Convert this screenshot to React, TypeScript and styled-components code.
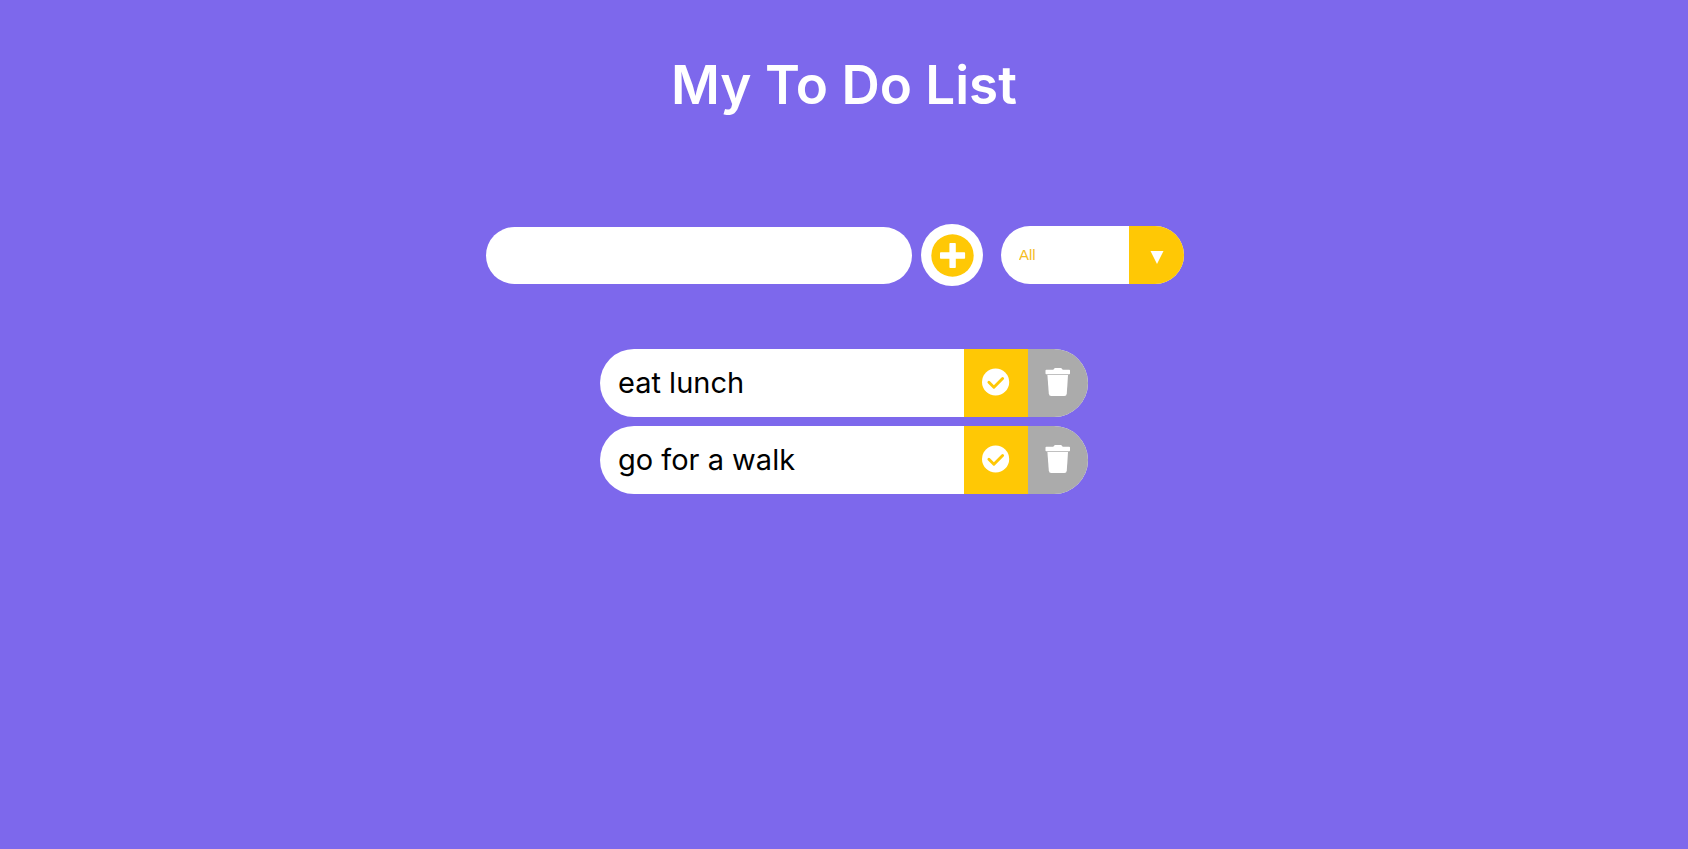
import React, { useState } from "react";
import styled, { createGlobalStyle } from "styled-components";

const GlobalStyle = createGlobalStyle`
  * {
    box-sizing: border-box;
  }

  body {
    margin: 0;
    min-height: 100vh;
    background: #7d68ec;
    font-family: Inter, "Open Sans", sans-serif;
  }
`;

const Header = styled.header`
  display: flex;
  justify-content: center;
  padding: 48px 16px 0;
`;

const Title = styled.h1`
  margin: 0;
  color: #fff;
  font-size: 53px;
  font-weight: 600;
  line-height: 74px;
`;

const Form = styled.form`
  display: flex;
  flex-wrap: wrap;
  align-items: center;
  justify-content: center;
  margin-top: 102px;
`;

const TaskInput = styled.input`
  width: 426px;
  max-width: 100%;
  height: 57px;
  padding: 0 24px;
  border: 0;
  border-radius: 29px;
  outline: 0;
  background: #fff;
  color: #000;
  font: inherit;
  font-size: 24px;
`;

const AddButton = styled.button`
  display: flex;
  align-items: center;
  justify-content: center;
  width: 62px;
  height: 62px;
  margin-left: 9px;
  padding: 0;
  border: 0;
  border-radius: 50%;
  background: #fff;
  cursor: pointer;
`;

const Filter = styled.div`
  display: grid;
  grid-template-columns: 128px 55px;
  height: 58px;
  margin: 0 18px;
  overflow: hidden;
  border-radius: 29px;
  background: #fff;
`;

const FilterSelect = styled.select`
  grid-area: 1 / 1 / 2 / 3;
  padding: 0 18px 2px;
  border: 0;
  outline: 0;
  appearance: none;
  background: transparent;
  color: #f5bd1f;
  font-family: "Liberation Sans", Arial, sans-serif;
  font-size: 15px;
  cursor: pointer;
`;

const FilterArrow = styled.span`
  display: flex;
  grid-area: 1 / 2 / 2 / 3;
  align-items: center;
  justify-content: center;
  padding-top: 5px;
  background: #ffc805;
  pointer-events: none;
`;

const List = styled.ul`
  display: grid;
  gap: 9px;
  width: 488px;
  max-width: 100%;
  margin: 63px auto 0;
  padding: 0;
  list-style: none;
`;

const Item = styled.li`
  display: flex;
  height: 68px;
  overflow: hidden;
  border-radius: 34px;
  background: #fff;
`;

const ItemText = styled.span<{ $done: boolean }>`
  flex: 1;
  padding-left: 18px;
  color: #000;
  font-size: 29px;
  line-height: 68px;
  opacity: ${(p) => (p.$done ? 0.5 : 1)};
  text-decoration: ${(p) => (p.$done ? "line-through" : "none")};
`;

const ItemButton = styled.button<{ $kind: "check" | "trash" }>`
  display: flex;
  align-items: center;
  justify-content: center;
  width: ${(p) => (p.$kind === "check" ? 64 : 60)}px;
  padding: 0 0 2px;
  border: 0;
  background: ${(p) => (p.$kind === "check" ? "#ffc805" : "#ababab")};
  cursor: pointer;
`;

const PlusIcon = () => (
  <svg width="43" height="43" viewBox="0 0 43 43" aria-hidden="true">
    <circle cx="21.5" cy="21.5" r="21.2" fill="#ffc805" />
    <path
      d="M19.2 9h4.8q.8 0 .8.8v8.4h8.5q.8 0 .8.8v5q0 .8-.8.8h-8.5v8.5q0 .8-.8.8h-4.8q-.8 0-.8-.8v-8.5H9.8q-.8 0-.8-.8v-5q0-.8.8-.8h8.6V9.800q0-.8.8-.8z"
      fill="#fff"
    />
  </svg>
);

const CheckIcon = () => (
  <svg width="28" height="28" viewBox="0 0 28 28" aria-hidden="true">
    <circle cx="13.600" cy="14" r="13.6" fill="#fff" />
    <path
      d="M6.900 14.200l5 5L20.600 10.500"
      fill="none"
      stroke="#ffc805"
      strokeWidth="2.9"
      strokeLinecap="round"
      strokeLinejoin="round"
    />
  </svg>
);

const TrashIcon = () => (
  <svg width="26" height="28" viewBox="0 0 26 28" fill="#fff" aria-hidden="true">
    <path d="M1.300 1.800h7L9.200.5Q9.600 0 10.300 0h5.400q.7 0 1.100.5l.9 1.300h6.500q.8 0 .8.8v2.800q0 .8-.8.8H1.300q-.8 0-.8-.8V2.600q0-.8.8-.8z" />
    <path d="M2.400 6.900h20.600l-1.200 18.600q-.2 2.500-2.400 2.500H6.200q-2.200 0-2.400-2.500z" />
  </svg>
);

type Todo = { id: number; text: string; done: boolean };

export default function App() {
  const [text, setText] = useState("");
  const [filter, setFilter] = useState("all");
  const [todos, setTodos] = useState<Todo[]>([
    { id: 1, text: "eat lunch", done: false },
    { id: 2, text: "go for a walk", done: false },
  ]);

  const addTodo = (event: React.FormEvent) => {
    event.preventDefault();
    if (!text.trim()) return;
    setTodos([...todos, { id: Date.now(), text, done: false }]);
    setText("");
  };

  const toggle = (id: number) =>
    setTodos(todos.map((t) => (t.id === id ? { ...t, done: !t.done } : t)));

  const remove = (id: number) => setTodos(todos.filter((t) => t.id !== id));

  const visible = todos.filter(
    (t) => filter === "all" || t.done === (filter === "completed")
  );

  return (
    <>
      <GlobalStyle />
      <Header>
        <Title>My To Do List</Title>
      </Header>
      <main>
        <Form onSubmit={addTodo}>
          <TaskInput
            type="text"
            aria-label="New task"
            value={text}
            onChange={(e) => setText(e.target.value)}
          />
          <AddButton type="submit" aria-label="Add task">
            <PlusIcon />
          </AddButton>
          <Filter>
            <FilterSelect
              aria-label="Filter tasks"
              value={filter}
              onChange={(e) => setFilter(e.target.value)}
            >
              <option value="all">All</option>
              <option value="completed">Completed</option>
              <option value="uncompleted">Uncompleted</option>
            </FilterSelect>
            <FilterArrow>
              <svg width="14" height="13" viewBox="0 0 14 13" aria-hidden="true">
                <path d="M.5 0h13L7 13z" fill="#fff" />
              </svg>
            </FilterArrow>
          </Filter>
        </Form>
        <List>
          {visible.map((todo) => (
            <Item key={todo.id}>
              <ItemText $done={todo.done}>{todo.text}</ItemText>
              <ItemButton
                type="button"
                $kind="check"
                aria-label={`Complete ${todo.text}`}
                onClick={() => toggle(todo.id)}
              >
                <CheckIcon />
              </ItemButton>
              <ItemButton
                type="button"
                $kind="trash"
                aria-label={`Delete ${todo.text}`}
                onClick={() => remove(todo.id)}
              >
                <TrashIcon />
              </ItemButton>
            </Item>
          ))}
        </List>
      </main>
    </>
  );
}
